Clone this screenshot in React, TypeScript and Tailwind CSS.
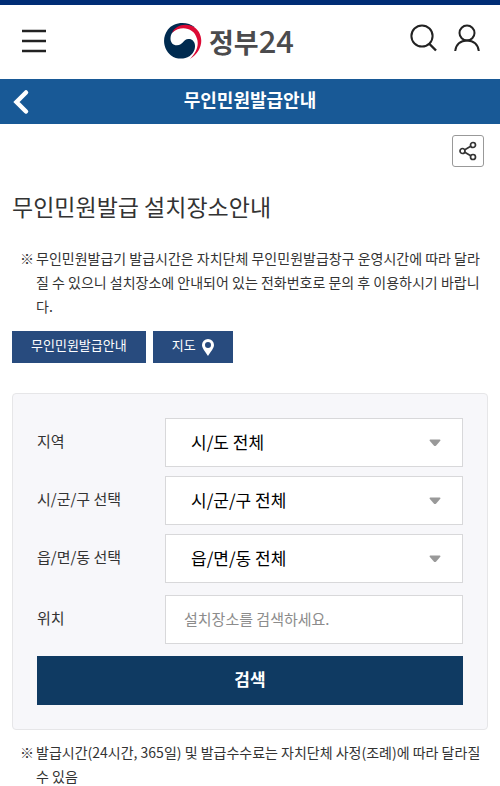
import type { ReactNode } from "react";

interface FieldProps {
  id: string;
  label: string;
  children: ReactNode;
}

interface SelectBoxProps {
  id: string;
  label: string;
  placeholder: string;
}

function GovLogo() {
  return (
    <svg viewBox="488 66 118 116" className="h-[38px] w-[39px]" aria-hidden="true">
      <path
        fill="#002b50"
        d="M585 82C562 63 520 64 502 90C483 116 489 150 512 168C538 187 576 177 584 149C589 129 578 117 565 118C549 119 549 137 530 137C514 137 507 122 512 106C519 86 550 72 585 82Z"
      />
      <path
        fill="#dc0a35"
        d="M515 99C523 77 557 66 582 81C615 103 612 154 569 179C590 158 598 136 591 116C582 84 543 74 515 99Z"
      />
    </svg>
  );
}

function Header() {
  return (
    <header className="flex h-[79px] items-center justify-between border-t-[5px] border-[#002d75] pr-5 pb-0.5 pl-[21px]">
      <button type="button" aria-label="메뉴">
        <svg width="26" height="24" viewBox="0 0 26 24" stroke="#222" strokeWidth="2.4" aria-hidden="true">
          <path d="M1 2h24M1 12h24M1 22h24" />
        </svg>
      </button>
      <a href="#" className="flex items-center gap-[7px] text-[#4b4b4d]">
        <GovLogo />
        <span className="flex items-baseline leading-10">
          <span className="text-[27px] font-bold">정부</span>
          <span className="text-[31px] font-medium">24</span>
        </span>
      </a>
      <div className="flex gap-4 pb-1.5">
        <button type="button" aria-label="검색창 열기">
          <svg width="28" height="28" viewBox="0 0 28 28" fill="none" stroke="#222" strokeWidth="2" aria-hidden="true">
            <circle cx="12" cy="12" r="10.6" />
            <path d="M19 19.500L26 26.500" strokeWidth="2.4" />
          </svg>
        </button>
        <button type="button" aria-label="로그인">
          <svg width="26" height="28" viewBox="0 0 26 28" fill="none" stroke="#222" strokeWidth="2" aria-hidden="true">
            <circle cx="13" cy="9" r="7.5" />
            <path d="M1.2 27C1.8 20.5 6.5 16.5 13 16.5S24.2 20.5 24.8 27" />
          </svg>
        </button>
      </div>
    </header>
  );
}

function Field({ id, label, children }: FieldProps) {
  return (
    <div className="flex items-center">
      <label htmlFor={id} className="w-32 shrink-0 pb-0.5 text-[15px] text-[#333]">
        {label}
      </label>
      <div className="relative min-w-0 flex-1">{children}</div>
    </div>
  );
}

function SelectBox({ id, label, placeholder }: SelectBoxProps) {
  return (
    <Field id={id} label={label}>
      <select
        id={id}
        className="block h-[49px] w-full appearance-none border border-[#d8d8da] bg-white px-[25px] pb-0.5 text-[17px] text-black"
      >
        <option>{placeholder}</option>
      </select>
      <svg
        viewBox="0 0 12 8"
        className="pointer-events-none absolute top-1/2 right-[22px] h-2 w-3 -translate-y-1/2"
        aria-hidden="true"
      >
        <path d="M1.2 .5h9.6q1 .3 .5 1.3L7.2 6.6Q6 7.6 4.8 6.6L.7 1.8Q.2 .8 1.2 .5z" fill="#999" />
      </svg>
    </Field>
  );
}

function Note({ children }: { children: ReactNode }) {
  return (
    <p className="flex gap-0.5 pl-2 text-[14px] leading-6">
      <span className="shrink-0">※</span>
      <span>{children}</span>
    </p>
  );
}

export default function App() {
  return (
    <div className="bg-white font-['Noto_Sans_CJK_KR','Noto_Sans',sans-serif] text-[#333]">
      <Header />
      <div className="grid h-[45px] grid-cols-[1fr_auto_1fr] items-center bg-[#185996] px-3 text-white">
        <button type="button" aria-label="뒤로" className="justify-self-start">
          <svg width="18" height="26" viewBox="0 0 18 26" fill="none" stroke="#fff" strokeWidth="4.5" aria-hidden="true">
            <path d="M14 3.500L4.500 13L14 22.500" strokeLinecap="round" />
          </svg>
        </button>
        <h1 className="pb-1 text-[18px] font-bold">무인민원발급안내</h1>
      </div>

      <main className="px-3 pt-[11px]">
        <div className="flex justify-end pr-1">
          <button
            type="button"
            aria-label="공유하기"
            className="flex size-8 items-center justify-center rounded-[3px] border border-[#999]"
          >
            <svg width="20" height="20" viewBox="0 0 20 20" fill="none" stroke="#333" strokeWidth="1.7" aria-hidden="true">
              <circle cx="4.5" cy="10" r="2.5" />
              <circle cx="15" cy="4" r="2.5" />
              <circle cx="15" cy="16" r="2.5" />
              <path d="M6.800 8.700L12.700 5.300M6.800 11.300L12.700 14.700" />
            </svg>
          </button>
        </div>

        <h2 className="mt-[23px] mb-6 text-[23px] leading-8">무인민원발급 설치장소안내</h2>

        <Note>
          무인민원발급기 발급시간은 자치단체 무인민원발급창구 운영시간에 따라 달라질 수 있으니 설치장소에 안내되어
          있는 전화번호로 문의 후 이용하시기 바랍니다.
        </Note>

        <div className="mt-[13px] flex gap-[7px] text-[13px] text-white">
          <a href="#" className="flex h-8 items-center bg-[#284b7e] px-[19px] pb-1">
            무인민원발급안내
          </a>
          <a href="#" className="flex h-8 items-center gap-1.5 bg-[#284b7e] px-[19px]">
            <span className="pb-1">지도</span>
            <svg width="12" height="17" viewBox="0 0 12 17" aria-hidden="true">
              <path
                fill="#fff"
                fillRule="evenodd"
                d="M6 0a6 6 0 0 0-6 6c0 3.5 3.5 6.5 6 11c2.500-4.500 6-7.500 6-11a6 6 0 0 0-6-6zm0 3a3 3 0 1 1 0 6a3 3 0 0 1 0-6z"
              />
            </svg>
          </a>
        </div>

        <form className="mt-[30px] mb-2.5 rounded border border-[#e6e6e8] bg-[#f7f7fa] p-6">
          <div className="space-y-[9px]">
            <SelectBox id="sido" label="지역" placeholder="시/도 전체" />
            <SelectBox id="sigungu" label="시/군/구 선택" placeholder="시/군/구 전체" />
            <SelectBox id="dong" label="읍/면/동 선택" placeholder="읍/면/동 전체" />
          </div>
          <div className="mt-3">
            <Field id="place" label="위치">
              <input
                id="place"
                type="text"
                placeholder="설치장소를 검색하세요."
                className="block h-[49px] w-full border border-[#d8d8da] bg-white px-[18px] pb-0.5 text-[15px] placeholder:text-[#8c8c8c]"
              />
            </Field>
          </div>
          <button type="button" className="mt-3 h-[49px] w-full bg-[#0f3a62] pb-1 text-[17px] font-bold text-white">
            검색
          </button>
        </form>

        <Note>발급시간(24시간, 365일) 및 발급수수료는 자치단체 사정(조례)에 따라 달라질 수 있음</Note>
      </main>
    </div>
  );
}
